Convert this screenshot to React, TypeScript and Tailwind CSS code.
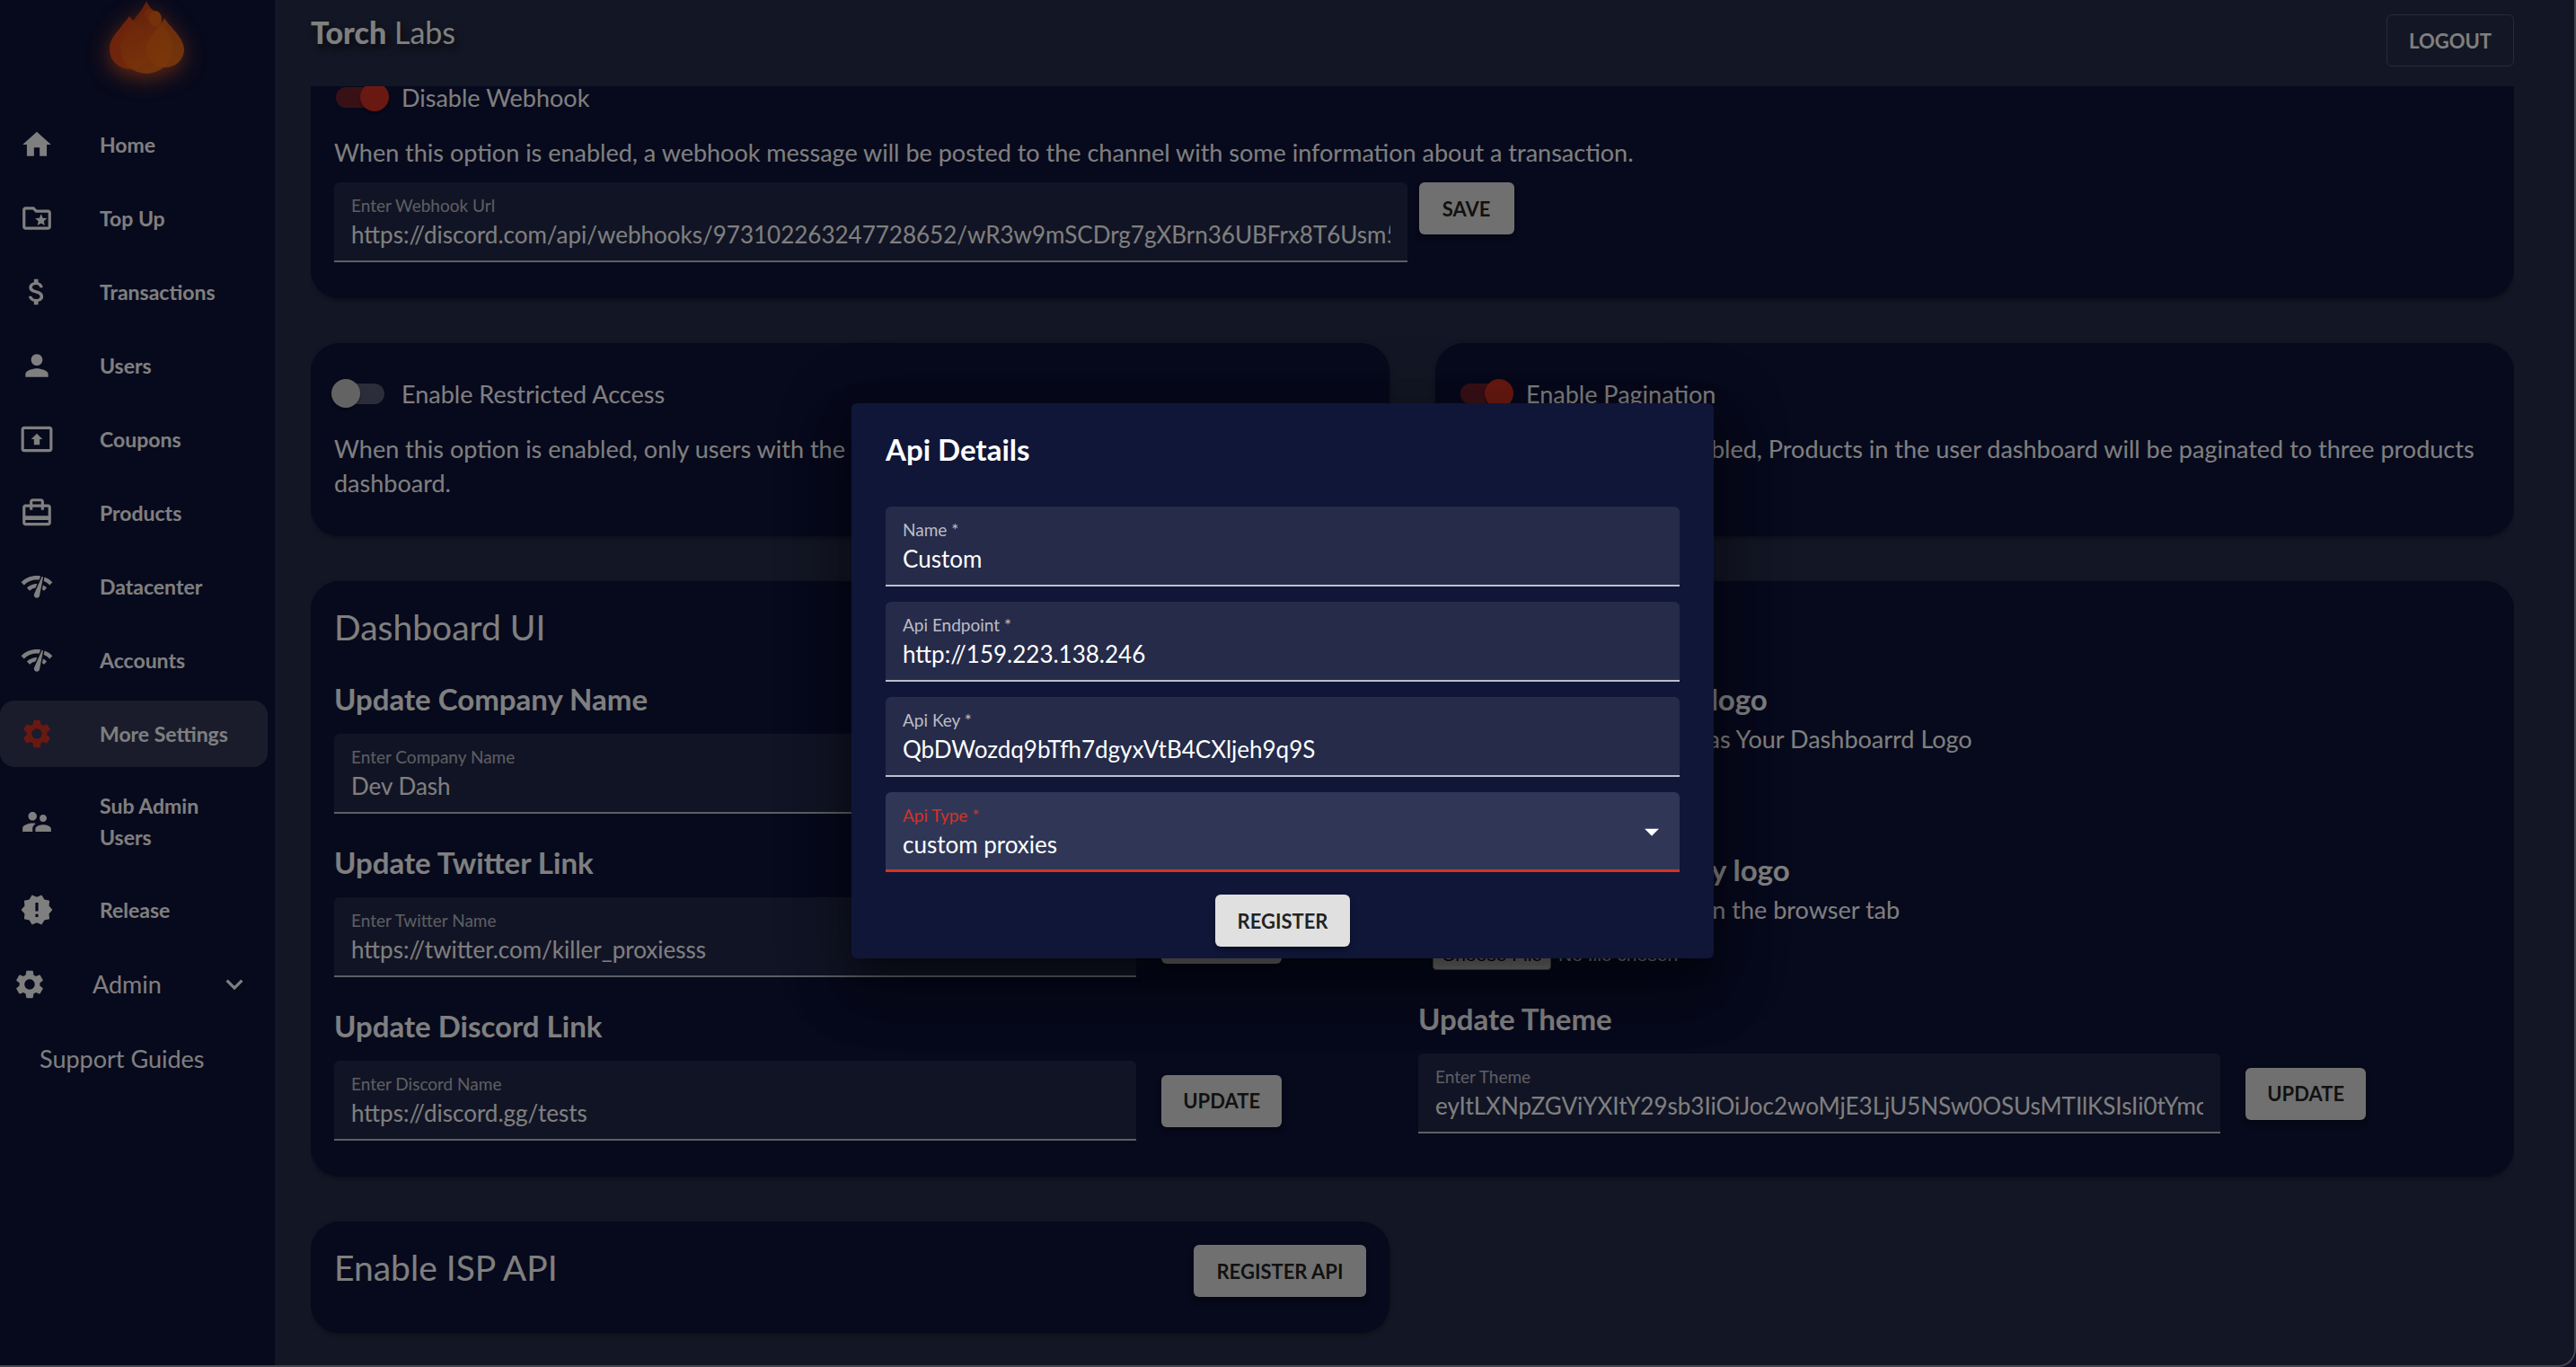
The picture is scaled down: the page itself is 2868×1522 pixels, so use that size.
import { useId, type ReactNode } from "react";
import type { IconType } from "react-icons";
import {
  MdArrowDropDown,
  MdAttachMoney,
  MdCardTravel,
  MdExpandMore,
  MdHome,
  MdNetworkCheck,
  MdNewReleases,
  MdOutlineFolderSpecial,
  MdPerson,
  MdPresentToAll,
  MdSettings,
  MdSupervisorAccount,
} from "react-icons/md";

const navItems: { label: string; icon: IconType; active?: boolean }[] = [
  { label: "Home", icon: MdHome },
  { label: "Top Up", icon: MdOutlineFolderSpecial },
  { label: "Transactions", icon: MdAttachMoney },
  { label: "Users", icon: MdPerson },
  { label: "Coupons", icon: MdPresentToAll },
  { label: "Products", icon: MdCardTravel },
  { label: "Datacenter", icon: MdNetworkCheck },
  { label: "Accounts", icon: MdNetworkCheck },
  { label: "More Settings", icon: MdSettings, active: true },
  { label: "Sub Admin Users", icon: MdSupervisorAccount },
  { label: "Release", icon: MdNewReleases },
];

function FlameLogo() {
  return (
    <svg
      viewBox="0 0 84 84"
      className="h-[84px] w-[84px] overflow-visible drop-shadow-[0_6px_12px_rgba(255,100,30,0.8)]"
      role="img"
      aria-label="Torch Labs"
    >
      <defs>
        <linearGradient id="flame-mid" x1="0" y1="0" x2="0.4" y2="1">
          <stop offset="0" stopColor="#d23e14" />
          <stop offset="1" stopColor="#f26c14" />
        </linearGradient>
        <linearGradient id="flame-left" x1="0" y1="0" x2="1" y2="1">
          <stop offset="0" stopColor="#d84018" />
          <stop offset="1" stopColor="#e85618" />
        </linearGradient>
        <linearGradient id="flame-right" x1="0" y1="0" x2="0.6" y2="1">
          <stop offset="0" stopColor="#ea6014" />
          <stop offset="1" stopColor="#f87214" />
        </linearGradient>
      </defs>
      <path d="M22 18C24 22 44 38 44 55A22 22 0 0 1 0 55C0 42 8 37 22 18Z" fill="url(#flame-left)" />
      <path d="M41 1C45 12 70 32 70 54A29 28 0 0 1 12 54C12 34 34 18 41 1Z" fill="url(#flame-mid)" opacity="0.88" />
      <path d="M61 20C66 29 83 42 83 55A21 20 0 0 1 41 55C41 40 56 32 61 20Z" fill="url(#flame-right)" opacity="0.85" />
      <circle cx="45" cy="16" r="6" fill="#dc5214" />
      <ellipse cx="51" cy="21" rx="7" ry="9" fill="#ea6214" />
    </svg>
  );
}

function NavItem({ label, icon: Icon, active }: { label: string; icon: IconType; active?: boolean }) {
  return (
    <a
      href="#"
      aria-current={active ? "page" : undefined}
      className={
        active
          ? "flex min-h-[74px] items-center rounded-2xl bg-white/16 py-[18px] pl-[22px]"
          : "flex min-h-[74px] items-center rounded-2xl py-[18px] pl-[22px]"
      }
    >
      <Icon className={active ? "mr-[51px] size-[38px] shrink-0 text-[#d23324]" : "mr-[51px] size-[38px] shrink-0"} />
      <span className="w-[150px] text-[23px] leading-[35px] font-bold">{label}</span>
    </a>
  );
}

function Sidebar() {
  return (
    <aside className="flex w-[307px] shrink-0 flex-col border-r border-white/10 bg-[#0e1338]">
      <div className="mb-[40px] flex justify-center pl-[22px]">
        <FlameLogo />
      </div>
      <nav className="flex flex-col gap-2 pr-2">
        {navItems.map((item) => (
          <NavItem key={item.label} {...item} />
        ))}
        <button type="button" className="flex h-[76px] items-center pl-[14px] text-left">
          <MdSettings className="mr-[51px] size-[38px]" />
          <span className="flex-1 text-[27px]">Admin</span>
          <MdExpandMore className="mr-[18px] size-[38px]" />
        </button>
        <a href="#" className="flex h-[74px] items-center pl-[44px] text-[27px]">
          Support Guides
        </a>
      </nav>
    </aside>
  );
}

function Card({ className, children }: { className?: string; children: ReactNode }) {
  return (
    <section
      className={`rounded-[32px] bg-[#0e1338] pt-[26px] pb-10 pl-[26px] shadow-[0_2px_5px_rgba(0,0,0,0.35)] ${className ?? "pr-[26px]"}`}
    >
      {children}
    </section>
  );
}

function Switch({ label, checked }: { label: string; checked: boolean }) {
  return (
    <label className="flex h-[61px] items-center text-[27px] leading-6">
      <input type="checkbox" role="switch" defaultChecked={checked} className="peer sr-only" />
      <span className="relative ml-[2px] h-[23px] w-[54px] rounded-full bg-white/30 peer-checked:bg-[#d23324]/50 after:absolute after:-top-[5px] after:-left-[5px] after:size-8 after:rounded-full after:bg-[#c6c6c6] after:shadow-[0_2px_3px_rgba(0,0,0,0.4)] peer-checked:after:left-[27px] peer-checked:after:bg-[#d23324]" />
      <span className="ml-[19px]">{label}</span>
    </label>
  );
}

function TextField({ label, value, className }: { label: string; value: string; className?: string }) {
  const id = useId();
  return (
    <div
      className={`flex h-[89px] flex-col rounded-t-md border-b-2 border-white/70 bg-white/9 px-[19px] pt-[14px] ${className ?? ""}`}
    >
      <label htmlFor={id} className="text-[19px] leading-6 text-white/70">
        {label}
      </label>
      <input
        id={id}
        type="text"
        defaultValue={value}
        className="h-10 w-full min-w-0 bg-transparent text-[26px] leading-10 outline-none"
      />
    </div>
  );
}

function SelectField({ label, value }: { label: string; value: string }) {
  const id = useId();
  return (
    <div className="relative flex h-[89px] flex-col rounded-t-md border-b-3 border-[#d23324] bg-[#303756] px-[19px] pt-[14px]">
      <label htmlFor={id} className="text-[19px] leading-6 text-[#d23324]">
        {label}
      </label>
      <select id={id} defaultValue={value} className="h-10 w-full appearance-none bg-transparent text-[26px] leading-10 outline-none">
        <option value={value}>{value}</option>
      </select>
      <MdArrowDropDown className="pointer-events-none absolute top-[25px] right-[12px] size-[38px]" />
    </div>
  );
}

function ActionButton({ children, className }: { children: ReactNode; className: string }) {
  return (
    <button
      type="button"
      className={`h-[58px] shrink-0 rounded-md bg-[#e0e0e0] text-[22px] font-bold text-black/87 shadow-[0_4px_6px_rgba(0,0,0,0.35)] ${className}`}
    >
      {children}
    </button>
  );
}

function UpdateRow({ title, label, value }: { title: string; label: string; value: string }) {
  return (
    <div>
      <h3 className="mb-[13px] text-[33px] leading-[51px] font-bold">{title}</h3>
      <div className="flex items-center gap-7">
        <TextField label={label} value={value} className="w-[74%]" />
        <ActionButton className="w-[134px]">UPDATE</ActionButton>
      </div>
    </div>
  );
}

function LogoUpload({ title, text }: { title: string; text: string }) {
  return (
    <label className="flex flex-col">
      <span className="text-[33px] leading-[51px] font-bold">{title}</span>
      <span className="text-[27px] leading-[38px]">{text}</span>
      <input
        type="file"
        className="mt-3 ml-4 h-9 font-['Liberation_Sans',sans-serif] text-[21px] leading-9 file:mr-2 file:h-9 file:w-[132px] file:rounded-sm file:border file:border-[#8a8a8a] file:bg-[#efefef] file:text-black"
      />
    </label>
  );
}

function ApiDialog() {
  return (
    <div className="absolute inset-0 flex items-center justify-center bg-black/50 pr-[10px] pb-1">
      <form
        role="dialog"
        aria-modal="true"
        aria-labelledby="api-dialog-title"
        className="flex w-[960px] flex-col rounded-md bg-[#101638] px-[38px] pt-[26px] pb-[13px] shadow-[0_18px_24px_-11px_rgba(0,0,0,0.3),0_38px_61px_5px_rgba(0,0,0,0.24),0_14px_74px_13px_rgba(0,0,0,0.22)]"
      >
        <h2 id="api-dialog-title" className="mb-[38px] text-[33px] leading-[51px] font-bold">
          Api Details
        </h2>
        <div className="flex flex-col gap-[17px]">
          <TextField label="Name *" value="Custom" />
          <TextField label="Api Endpoint *" value="http://159.223.138.246" />
          <TextField label="Api Key *" value="QbDWozdq9bTfh7dgyxVtB4CXljeh9q9S" />
          <SelectField label="Api Type *" value="custom proxies" />
        </div>
        <ActionButton className="mt-[25px] w-[150px] self-center">REGISTER</ActionButton>
      </form>
    </div>
  );
}

export default function App() {
  return (
    <div className="h-screen bg-[#150c2a] font-['Lato',sans-serif] text-white">
      <div className="relative flex h-full overflow-hidden rounded-br-[20px] border-r-2 border-b-2 border-[#45464f] bg-[#262c48]">
        <Sidebar />
        <div className="flex min-w-0 flex-1 flex-col pr-[67px] pl-[39px]">
          <header className="flex h-24 shrink-0 items-start justify-between">
            <h1 className="mt-3 text-[34px] leading-[48px] [text-shadow:3px_5px_8px_rgba(0,0,0,0.7)]">
              <span className="font-black">Torch</span> Labs
            </h1>
            <button type="button" className="mt-4 h-[58px] w-[142px] rounded-md border border-white/20 text-[22px] font-bold">
              LOGOUT
            </button>
          </header>
          <main className="min-h-0 flex-1 overflow-hidden">
            <div className="-mt-11 flex flex-col gap-[50px]">
              <Card>
                <Switch label="Disable Webhook" checked />
                <p className="mt-3 mb-[14px] text-[27px] leading-[38px]">
                  When this option is enabled, a webhook message will be posted to the channel with some information about a
                  transaction.
                </p>
                <div className="flex items-start gap-[13px]">
                  <TextField
                    label="Enter Webhook Url"
                    value="https://discord.com/api/webhooks/973102263247728652/wR3w9mSCDrg7gXBrn36UBFrx8T6Usm5"
                    className="w-[calc(50%-6px)]"
                  />
                  <ActionButton className="w-[106px]">SAVE</ActionButton>
                </div>
              </Card>
              <div className="grid grid-cols-2 gap-[51px]">
                <Card>
                  <Switch label="Enable Restricted Access" checked={false} />
                  <p className="mt-3 text-[27px] leading-[38px]">
                    When this option is enabled, only users with the given discord role will be able to access the user dashboard.
                  </p>
                </Card>
                <Card>
                  <Switch label="Enable Pagination" checked />
                  <p className="mt-3 text-[27px] leading-[38px]">
                    When this option is enabled, Products in the user dashboard will be paginated to three products per page.
                  </p>
                </Card>
              </div>
              <Card className="pr-[13px]">
                <h2 className="mb-[29px] text-[39px] leading-[51px]">Dashboard UI</h2>
                <div className="grid grid-cols-2">
                  <div className="flex flex-col gap-[29px]">
                    <UpdateRow title="Update Company Name" label="Enter Company Name" value="Dev Dash" />
                    <UpdateRow title="Update Twitter Link" label="Enter Twitter Name" value="https://twitter.com/killer_proxiesss" />
                    <UpdateRow title="Update Discord Link" label="Enter Discord Name" value="https://discord.gg/tests" />
                  </div>
                  <div className="flex flex-col">
                    <div className="mb-[53px]">
                      <LogoUpload title="Update Dashboard UI logo" text="This Image Will Be Applied as Your Dashboarrd Logo" />
                    </div>
                    <div className="mb-[29px]">
                      <LogoUpload title="Update Your Secondary logo" text="This Logo will be displayed in the browser tab" />
                    </div>
                    <UpdateRow
                      title="Update Theme"
                      label="Enter Theme"
                      value="eyItLXNpZGViYXItY29sb3IiOiJoc2woMjE3LjU5NSw0OSUsMTIlKSIsIi0tYmct"
                    />
                  </div>
                </div>
              </Card>
              <div className="grid grid-cols-2 gap-[51px]">
                <Card>
                  <div className="flex items-start justify-between">
                    <h2 className="text-[39px] leading-[51px]">Enable ISP API</h2>
                    <ActionButton className="w-[192px]">REGISTER API</ActionButton>
                  </div>
                </Card>
              </div>
            </div>
          </main>
        </div>
        <ApiDialog />
      </div>
    </div>
  );
}
